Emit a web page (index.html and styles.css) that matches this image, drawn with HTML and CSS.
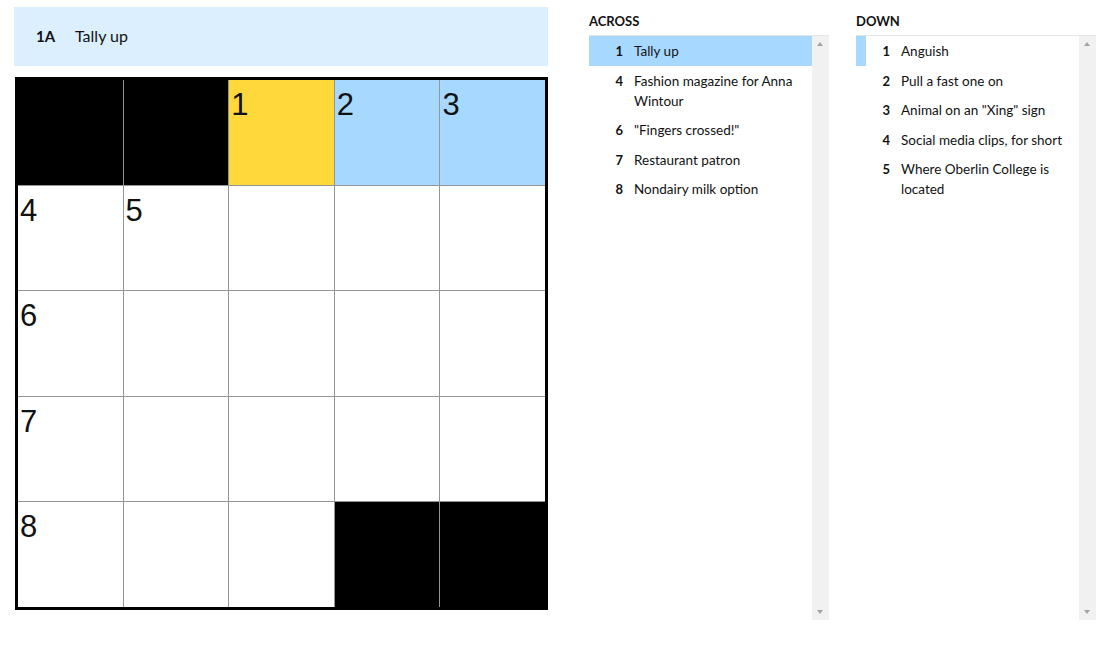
FILE: index.html
```html
<!DOCTYPE html>
<html>
<head>
<meta charset="utf-8">
<link rel="stylesheet" href="styles.css">
</head>
<body>
<div class="app">
  <div class="board">
    <div class="clue-bar">
      <span class="clue-bar-num">1A</span>
      <span class="clue-bar-text">Tally up</span>
    </div>
    <div class="grid">
      <div class="cell block"></div>
      <div class="cell block"></div>
      <div class="cell selected"><span class="num">1</span></div>
      <div class="cell word"><span class="num">2</span></div>
      <div class="cell word"><span class="num">3</span></div>

      <div class="cell"><span class="num">4</span></div>
      <div class="cell"><span class="num">5</span></div>
      <div class="cell"></div>
      <div class="cell"></div>
      <div class="cell"></div>

      <div class="cell"><span class="num">6</span></div>
      <div class="cell"></div>
      <div class="cell"></div>
      <div class="cell"></div>
      <div class="cell"></div>

      <div class="cell"><span class="num">7</span></div>
      <div class="cell"></div>
      <div class="cell"></div>
      <div class="cell"></div>
      <div class="cell"></div>

      <div class="cell"><span class="num">8</span></div>
      <div class="cell"></div>
      <div class="cell"></div>
      <div class="cell block"></div>
      <div class="cell block"></div>
    </div>
  </div>

  <div class="lists">
    <section class="list">
      <h3 class="list-title">ACROSS</h3>
      <div class="list-box">
        <ol class="clues">
          <li class="clue active"><span class="clue-num">1</span><span class="clue-text">Tally up</span></li>
          <li class="clue"><span class="clue-num">4</span><span class="clue-text">Fashion magazine for Anna Wintour</span></li>
          <li class="clue"><span class="clue-num">6</span><span class="clue-text">"Fingers crossed!"</span></li>
          <li class="clue"><span class="clue-num">7</span><span class="clue-text">Restaurant patron</span></li>
          <li class="clue"><span class="clue-num">8</span><span class="clue-text">Nondairy milk option</span></li>
        </ol>
        <div class="scrollbar"><span class="arrow up"></span><span class="arrow down"></span></div>
      </div>
    </section>
    <section class="list">
      <h3 class="list-title">DOWN</h3>
      <div class="list-box">
        <ol class="clues">
          <li class="clue related"><span class="clue-num">1</span><span class="clue-text">Anguish</span></li>
          <li class="clue"><span class="clue-num">2</span><span class="clue-text">Pull a fast one on</span></li>
          <li class="clue"><span class="clue-num">3</span><span class="clue-text">Animal on an "Xing" sign</span></li>
          <li class="clue"><span class="clue-num">4</span><span class="clue-text">Social media clips, for short</span></li>
          <li class="clue"><span class="clue-num">5</span><span class="clue-text">Where Oberlin College is located</span></li>
        </ol>
        <div class="scrollbar"><span class="arrow up"></span><span class="arrow down"></span></div>
      </div>
    </section>
  </div>
</div>
</body>
</html>
```

FILE: styles.css
```css
* { box-sizing: border-box; }
html, body {
  margin: 0;
  padding: 0;
  background: #ffffff;
}
body {
  font-family: "Lato", "Liberation Sans", sans-serif;
  color: #121212;
}
.app {
  display: flex;
  align-items: flex-start;
  padding: 7px 0 0 14px;
}
.board {
  width: 534px;
  display: flex;
  flex-direction: column;
}
.clue-bar {
  height: 59px;
  background: #dcefff;
  display: flex;
  align-items: center;
  padding-left: 22px;
  padding-bottom: 2px;
}
.clue-bar-num {
  font-weight: 700;
  font-size: 15px;
  width: 39px;
}
.clue-bar-text {
  font-size: 16px;
}
.grid {
  margin-top: 11px;
  margin-left: 1px;
  width: 533px;
  height: 533px;
  border: 3px solid #000;
  background: #959595;
  display: grid;
  grid-template-columns: repeat(5, 1fr);
  grid-template-rows: repeat(5, 1fr);
  gap: 1px;
}
.cell {
  background: #fff;
  position: relative;
}
.cell.block { background: #000; }
.cell.selected { background: #ffd93b; }
.cell.word { background: #a7d8ff; }
.num {
  position: absolute;
  left: 2px;
  top: 9px;
  font-family: "Liberation Sans", Arial, sans-serif;
  font-size: 31px;
  line-height: 1;
  color: #111;
}
.lists {
  display: flex;
  gap: 27px;
  margin-left: 41px;
}
.list {
  width: 240px;
}
.list-title {
  margin: 0;
  height: 28px;
  line-height: 28px;
  font-size: 13px;
  font-weight: 700;
  letter-spacing: 0;
}
.list-box {
  display: flex;
  height: 585px;
  border-top: 1px solid #e6e6e6;
}
.clues {
  list-style: none;
  margin: 0;
  padding: 0;
  flex: 1;
}
.clue {
  display: flex;
  padding: 5px 0 4.5px;
  font-size: 13.5px;
  line-height: 20px;
}
.clue.active { background: #a7d8ff; }
.clue.related { box-shadow: inset 10px 0 0 #a7d8ff; }
.clue-num {
  width: 34px;
  flex: none;
  text-align: right;
  font-weight: 700;
  font-size: 13px;
  margin-right: 11px;
}
.clue-text {
  flex: 1;
  padding-right: 12px;
}
.scrollbar {
  width: 17px;
  flex: none;
  background: #f1f1f1;
  position: relative;
}
.arrow {
  position: absolute;
  left: 5px;
  width: 0;
  height: 0;
  border-left: 3.5px solid transparent;
  border-right: 3.5px solid transparent;
}
.arrow.up {
  top: 6px;
  border-bottom: 4px solid #a3a3a3;
}
.arrow.down {
  bottom: 6px;
  border-top: 4px solid #a3a3a3;
}
```
